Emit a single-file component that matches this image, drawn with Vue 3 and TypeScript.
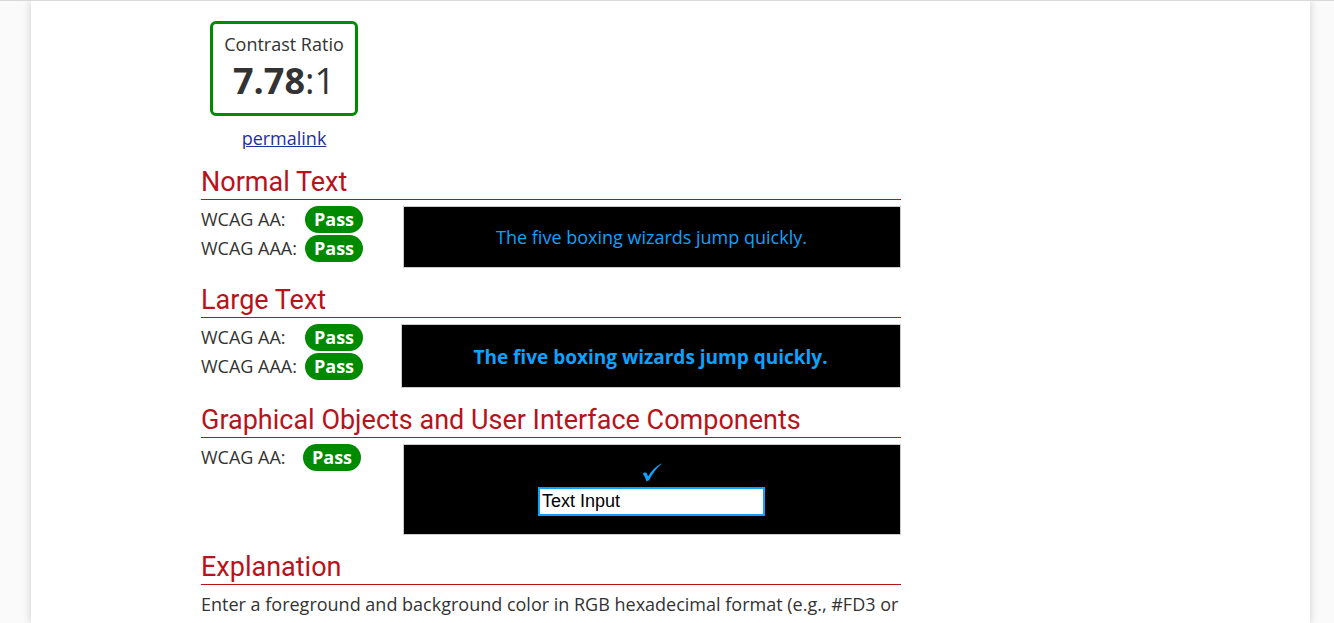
<script setup lang="ts">
import { ref } from 'vue'

interface Check {
  level: string
  result: string
}

interface Section {
  id: string
  title: string
  checks: Check[]
  sample: 'normal' | 'large' | 'component'
}

const aa: Check = { level: 'WCAG AA:', result: 'Pass' }
const aaa: Check = { level: 'WCAG AAA:', result: 'Pass' }

const sections: Section[] = [
  { id: 'normal', title: 'Normal Text', checks: [aa, aaa], sample: 'normal' },
  { id: 'large', title: 'Large Text', checks: [aa, aaa], sample: 'large' },
  {
    id: 'component',
    title: 'Graphical Objects and User Interface Components',
    checks: [aa],
    sample: 'component',
  },
]

const ratio = '7.78'
const sampleText = 'The five boxing wizards jump quickly.'
const inputText = ref('Text Input')
</script>

<template>
  <div class="page">
    <main class="sheet">
      <div class="content">
        <div class="summary">
          <div class="ratio">
            <span class="ratio-label">Contrast Ratio</span>
            <span class="ratio-value"><b>{{ ratio }}</b>:1</span>
          </div>
          <a class="permalink" href="#permalink">permalink</a>
        </div>

        <section v-for="s in sections" :key="s.id" class="section">
          <h2>{{ s.title }}</h2>
          <div class="result" :class="s.sample">
            <ul class="checks">
              <li v-for="c in s.checks" :key="c.level">
                <span class="level">{{ c.level }}</span>
                <b class="pill">{{ c.result }}</b>
              </li>
            </ul>
            <div class="sample">
              <template v-if="s.sample === 'component'">
                <svg class="tick" viewBox="0 0 20 20" aria-hidden="true">
                  <path d="M0.8 11 C2 9.2 4.2 9 5 10.8 L6.1 13.6 C9.3 8 13.7 3.4 19.2 0.6 L19.4 1 C14.6 5.2 10.3 10.6 7 17.2 L4.6 18.6 C3.7 15.6 2.6 13 0.8 11 Z" />
                </svg>
                <input v-model="inputText" type="text" aria-label="Sample text input" />
              </template>
              <template v-else>{{ sampleText }}</template>
            </div>
          </div>
        </section>

        <section class="section">
          <h2>Explanation</h2>
          <p>Enter a foreground and background color in RGB hexadecimal format (e.g., #FD3 or</p>
        </section>
      </div>
    </main>
  </div>
</template>

<style>
body {
  background: #fafafa;
}
</style>

<style scoped>
.page {
  box-sizing: border-box;
  height: 100vh;
  overflow: hidden;
  padding: 0 24px 0 31px;
  border-top: 1px solid #d9d9d9;
  background: #fafafa;
  color: #333;
  font-family: "Open Sans", "Noto Sans", sans-serif;
  font-size: 18px;
  line-height: 28px;
}

.sheet {
  box-sizing: border-box;
  min-height: 100%;
  padding: 20px 24px 0 170px;
  background: #fff;
  box-shadow: 0 0 8px #ccc;
}

.content {
  max-width: 700px;
}

.summary {
  display: flex;
  flex-direction: column;
  align-items: center;
  gap: 8px;
  width: 166px;
  margin-bottom: 16px;
}

.ratio {
  display: flex;
  flex-direction: column;
  align-items: center;
  padding: 6px 11px 10px;
  border: 3px solid #008a00;
  border-radius: 6px;
  white-space: nowrap;
}

.ratio-value {
  font-size: 36px;
  line-height: 45px;
}

.permalink {
  color: #1f309e;
}

.section {
  margin-bottom: 18px;
}

h2 {
  margin: 0 0 6px;
  padding-bottom: 2px;
  border-bottom: 1px solid #b8121b;
  color: #b8121b;
  font: 400 27px/29px Roboto, sans-serif;
}

.result {
  display: grid;
  grid-template-columns: 202px 1fr;
  align-items: start;
}

.result.large {
  grid-template-columns: 200px 1fr;
}

.checks {
  margin: 0;
  padding: 0;
  list-style: none;
}

.checks li {
  display: flex;
  align-items: center;
  margin-bottom: 2px;
  line-height: 27px;
}

.level {
  width: 104px;
}

.component .level {
  width: 102px;
}

.pill {
  padding: 0 9px;
  border-radius: 14px;
  background: #008a00;
  color: #fff;
}

.sample {
  display: flex;
  flex-direction: column;
  align-items: center;
  padding: 16px 17px 16px 16px;
  border: 1px solid #ccc;
  background: #000;
  color: #0da2ff;
}

.large .sample {
  padding-top: 17px;
  padding-bottom: 15px;
  font-size: 19px;
  font-weight: 700;
  line-height: 30px;
}

.component .sample {
  padding-bottom: 18px;
}

.tick {
  width: 20px;
  height: 20px;
  margin: 2px 0 4px;
  fill: #0da2ff;
}

input {
  box-sizing: border-box;
  width: 227px;
  height: 29px;
  padding: 0 2px;
  border: 2px solid #0da2ff;
  border-radius: 0;
  background: #fff;
  color: #000;
  font: 18px/22px "Liberation Sans", Arial, sans-serif;
}

p {
  margin: 0;
  line-height: 26px;
}
</style>
